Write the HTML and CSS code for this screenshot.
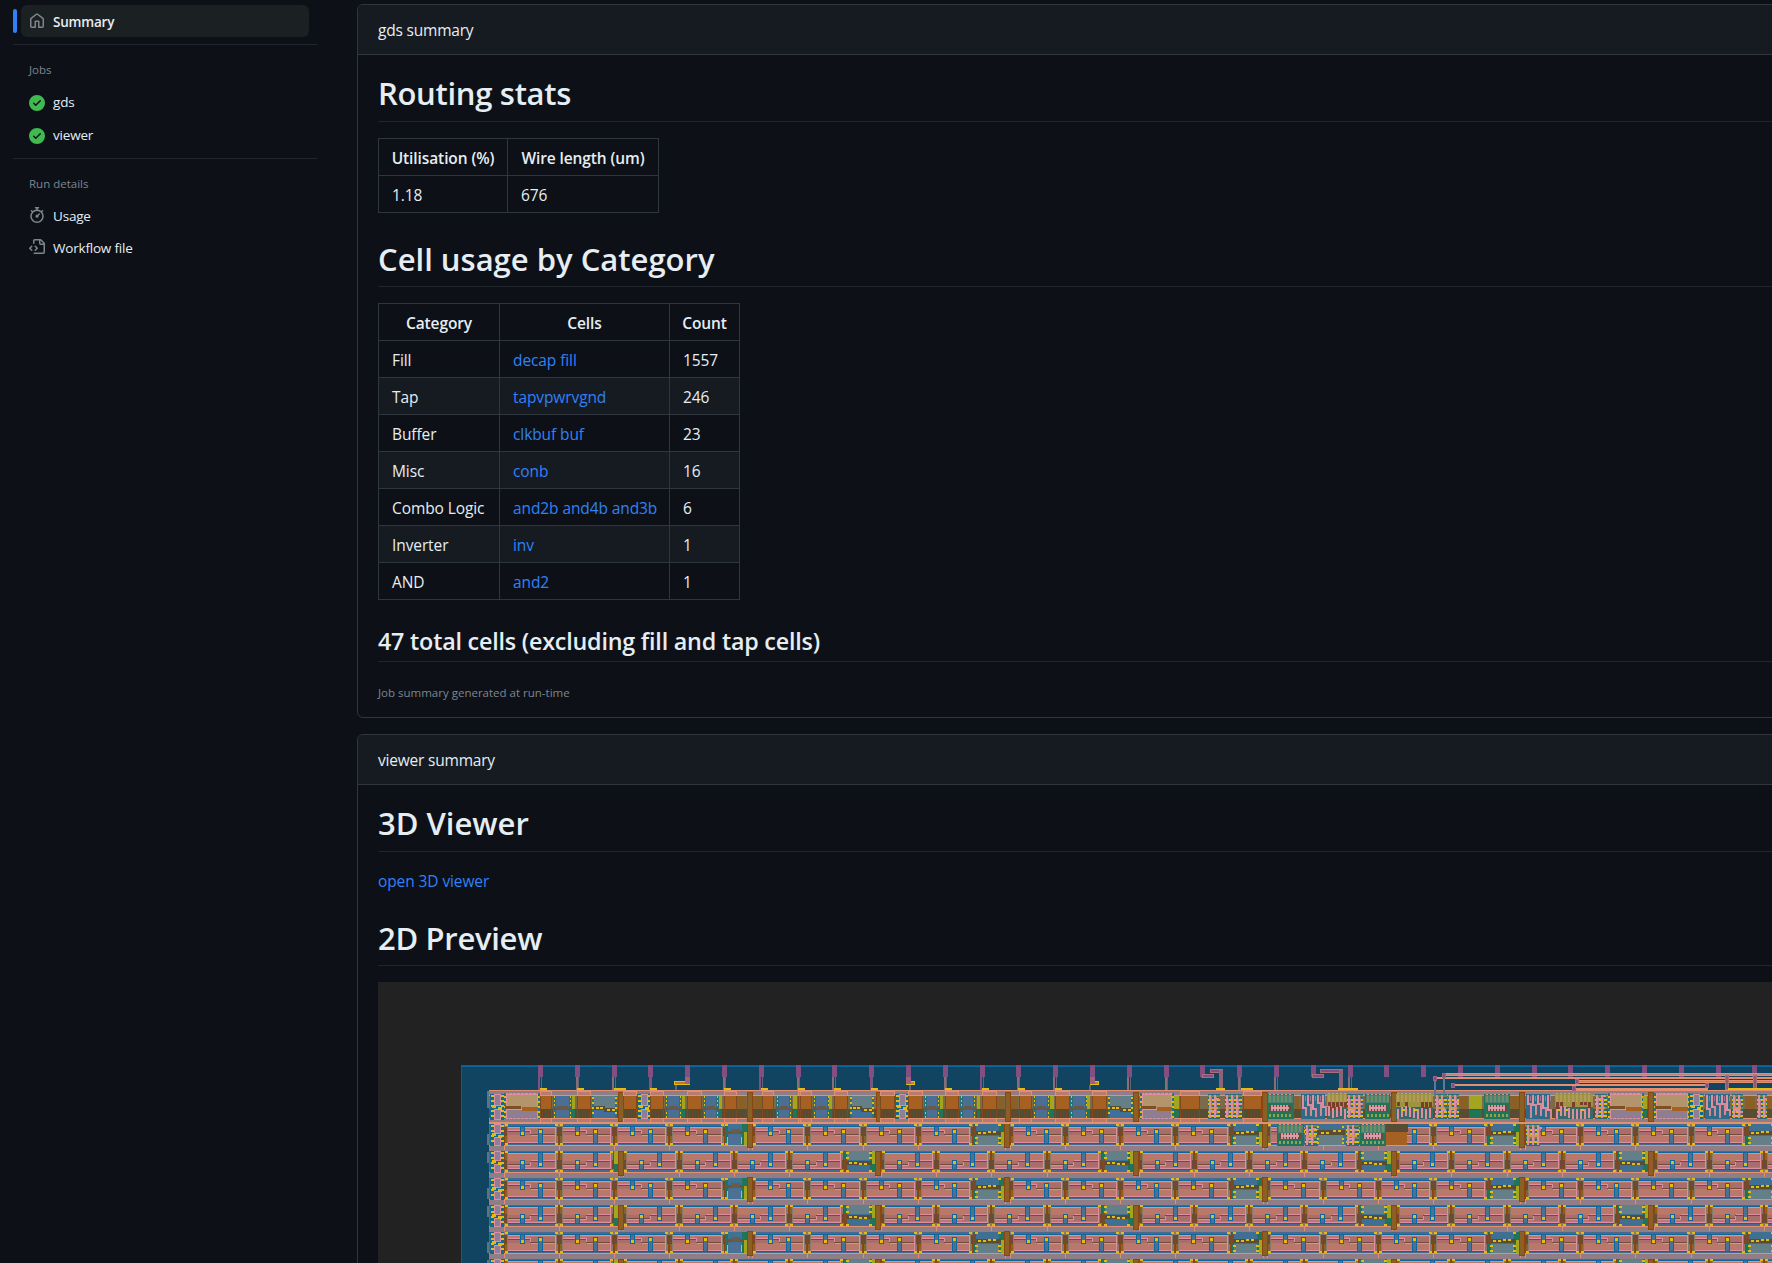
FILE: index.html
```html
<!DOCTYPE html>
<html lang="en">
<head>
<meta charset="utf-8">
<title>Workflow run summary</title>
<link rel="stylesheet" href="styles.css">
</head>
<body>
<div class="layout">
  <nav class="sidebar">
    <a class="item active"><svg class="icon" viewBox="0 0 16 16"><path d="M6.906.664a1.749 1.749 0 0 1 2.187 0l5.25 4.2c.415.332.657.835.657 1.367v7.019A1.75 1.75 0 0 1 13.25 15h-3.5a.75.75 0 0 1-.75-.75V9H7v5.25a.75.75 0 0 1-.75.75h-3.5A1.75 1.75 0 0 1 1 13.25V6.23c0-.531.242-1.034.657-1.366l5.25-4.2Zm1.25 1.171a.25.25 0 0 0-.312 0l-5.25 4.2a.25.25 0 0 0-.094.196v7.019c0 .138.112.25.25.25H5.5V8.25a.75.75 0 0 1 .75-.75h3.5a.75.75 0 0 1 .75.75v5.25h2.75a.25.25 0 0 0 .25-.25V6.23a.25.25 0 0 0-.094-.195Z"/></svg><span>Summary</span></a>
    <hr class="divider">
    <h2 class="group">Jobs</h2>
    <a class="item job"><svg class="icon ok" viewBox="0 0 16 16"><path d="M8 16A8 8 0 1 1 8 0a8 8 0 0 1 0 16Zm3.78-9.72a.751.751 0 0 0-.018-1.042.751.751 0 0 0-1.042-.018L6.75 9.19 5.28 7.72a.751.751 0 0 0-1.042.018.751.751 0 0 0-.018 1.042l2 2a.75.75 0 0 0 1.06 0Z"/></svg><span>gds</span></a>
    <a class="item job"><svg class="icon ok" viewBox="0 0 16 16"><path d="M8 16A8 8 0 1 1 8 0a8 8 0 0 1 0 16Zm3.78-9.72a.751.751 0 0 0-.018-1.042.751.751 0 0 0-1.042-.018L6.75 9.19 5.28 7.72a.751.751 0 0 0-1.042.018.751.751 0 0 0-.018 1.042l2 2a.75.75 0 0 0 1.06 0Z"/></svg><span>viewer</span></a>
    <hr class="divider second">
    <h2 class="group details">Run details</h2>
    <a class="item"><svg class="icon" viewBox="0 0 16 16"><path d="M5.75.75A.75.75 0 0 1 6.5 0h3a.75.75 0 0 1 0 1.5h-.75v1l-.001.041a6.724 6.724 0 0 1 3.464 1.435l.007-.006.75-.75a.749.749 0 0 1 1.275.326.749.749 0 0 1-.215.734l-.75.75-.006.007a6.75 6.75 0 1 1-10.548 0L2.72 5.03l-.75-.75a.751.751 0 0 1 .018-1.042.751.751 0 0 1 1.042-.018l.75.75.007.006A6.72 6.72 0 0 1 7.25 2.541V1.5H6.5a.75.75 0 0 1-.75-.75ZM8 14.5a5.25 5.25 0 1 0-.001-10.501A5.25 5.25 0 0 0 8 14.5Zm.389-6.7 1.33-1.33a.75.75 0 1 1 1.061 1.06L9.45 8.861A1.503 1.503 0 0 1 8 10.75a1.499 1.499 0 1 1 .389-2.95Z"/></svg><span>Usage</span></a>
    <a class="item"><svg class="icon" viewBox="0 0 16 16"><path d="M4 1.75C4 .784 4.784 0 5.75 0h5.586c.464 0 .909.184 1.237.513l2.914 2.914c.329.328.513.773.513 1.237v8.586A1.75 1.75 0 0 1 14.25 15h-9a.75.75 0 0 1 0-1.5h9a.25.25 0 0 0 .25-.25V6h-2.75A1.75 1.75 0 0 1 10 4.25V1.5H5.75a.25.25 0 0 0-.25.25v2.5a.75.75 0 0 1-1.5 0Zm1.72 4.97a.75.75 0 0 1 1.06 0l2 2a.75.75 0 0 1 0 1.06l-2 2a.749.749 0 0 1-1.275-.326.749.749 0 0 1 .215-.734l1.47-1.47-1.47-1.47a.75.75 0 0 1 0-1.06ZM3.28 7.78 1.81 9.25l1.47 1.47a.751.751 0 0 1-.018 1.042.751.751 0 0 1-1.042.018l-2-2a.75.75 0 0 1 0-1.06l2-2a.751.751 0 0 1 1.042.018.751.751 0 0 1 .018 1.042Zm8.22-6.218V4.25c0 .138.112.25.25.25h2.688l-.011-.013-2.914-2.914-.013-.011Z"/></svg><span>Workflow file</span></a>
  </nav>
  <main class="main">
    <section class="panel">
      <header class="panel-head">gds summary</header>
      <div class="panel-body">
        <h1 class="tight">Routing stats</h1>
        <table class="routing">
          <tr><th>Utilisation (%)</th><th>Wire length (um)</th></tr>
          <tr><td>1.18</td><td>676</td></tr>
        </table>
        <h1>Cell usage by Category</h1>
        <table class="cells">
          <tr><th>Category</th><th>Cells</th><th>Count</th></tr>
          <tr><td>Fill</td><td><a>decap</a> <a>fill</a></td><td>1557</td></tr>
          <tr><td>Tap</td><td><a>tapvpwrvgnd</a></td><td>246</td></tr>
          <tr><td>Buffer</td><td><a>clkbuf</a> <a>buf</a></td><td>23</td></tr>
          <tr><td>Misc</td><td><a>conb</a></td><td>16</td></tr>
          <tr><td>Combo Logic</td><td><a>and2b</a> <a>and4b</a> <a>and3b</a></td><td>6</td></tr>
          <tr><td>Inverter</td><td><a>inv</a></td><td>1</td></tr>
          <tr><td>AND</td><td><a>and2</a></td><td>1</td></tr>
        </table>
        <h2>47 total cells (excluding fill and tap cells)</h2>
        <p class="note">Job summary generated at run-time</p>
      </div>
    </section>
    <section class="panel viewer">
      <header class="panel-head">viewer summary</header>
      <div class="panel-body">
        <h1>3D Viewer</h1>
        <p class="link"><a>open 3D viewer</a></p>
        <h1 class="tight">2D Preview</h1>
        <canvas class="preview" id="chip" width="1394" height="281"></canvas>
      </div>
    </section>
  </main>
</div>
<script src="chip.js"></script>
</body>
</html>
```
FILE: styles.css
```css
* { box-sizing: border-box; }
html, body { height: 100%; }
body {
  margin: 0;
  overflow: hidden;
  background: #0d1117;
  color: #e6edf3;
  font: 13.5px/20px "Open Sans", "Noto Sans", sans-serif;
  letter-spacing: -.2px;
}
.layout { display: flex; height: 100%; overflow: hidden; }
.sidebar { flex: none; width: 357px; padding: 5px 40px 0 13px; }
.item {
  position: relative;
  display: flex;
  align-items: center;
  gap: 8px;
  width: 288px;
  height: 32px;
  margin-left: 8px;
  padding: 0 8px;
  border-radius: 6px;
}
.item span { padding-top: 2px; }
.item.job { height: 33px; padding-bottom: 1px; }
.item.job span { padding: 0 0 2px; }
.item.active { background: #1b2023; font-weight: 600; }
.item.active::before {
  content: "";
  position: absolute;
  left: -8px;
  top: 4px;
  width: 4px;
  height: 24px;
  border-radius: 6px;
  background: #2f81f7;
}
.icon { width: 16px; height: 16px; fill: #7d8590; }
.icon.ok { fill: #3fb950; }
.divider { height: 1px; margin: 7px 0 16px; border: 0; background: #21262d; }
.divider.second { margin: 5px 0 16px; }
.group {
  margin: 0 0 8px 16px;
  color: #7d8590;
  font-size: 11.5px;
  font-weight: 400;
  letter-spacing: 0;
  line-height: 18px;
}
.group.details { margin-bottom: 6px; }
.main { flex: none; width: 1440px; padding-top: 4px; }
.panel { border: 1px solid #30363d; border-radius: 6px; height: 714px; margin-bottom: 16px; }
.panel-head {
  height: 50px;
  padding: 13px 20px;
  border-bottom: 1px solid #30363d;
  border-radius: 6px 6px 0 0;
  background: #161b22;
  font-size: 15.5px;
  line-height: 24px;
}
.panel-body { padding: 16px 20px; font-size: 15.5px; line-height: 24px; letter-spacing: -.1px; }
.panel-body h1, .panel-body h2 {
  margin: 24px 0 16px;
  border-bottom: 1px solid #21262d;
  font-weight: 600;
}
.panel-body h1 { padding: 2px 0 7.6px; font-size: 31px; line-height: 40px; letter-spacing: 0; }
.panel-body h1.tight { letter-spacing: -.3px; }
.panel-body h2 { padding: 1.5px 0 5.7px; font-size: 23.3px; line-height: 30px; letter-spacing: -.2px; }
.panel-body h1:first-child { margin-top: 0; }
table { border-collapse: collapse; table-layout: fixed; }
.routing { width: 281px; }
.cells { width: 362px; }
.routing th:first-child { width: 129px; }
.cells th:first-child { width: 121px; }
.cells th:nth-child(2) { width: 170px; }
th, td { height: 37px; padding: 7px 13px 5px; border: 1px solid #30363d; text-align: left; white-space: nowrap; }
th { font-weight: 600; text-align: center; padding: 7px 0 5px; }
.cells tr:nth-child(odd):not(:first-child) td { background: #161b22; }
a { color: inherit; }
td a, .link a { color: #2f81f7; }
.note { margin: 21px 0 0; color: #7d8590; font-size: 11.5px; line-height: 20px; letter-spacing: 0; }
.link { margin: 0; padding-top: 1px; height: 24px; }
.preview { display: block; width: 1394px; height: 281px; background: #222; }
```
FILE: chip.js
```js
const canvas = document.getElementById('chip');
const g = canvas.getContext('2d');
g.translate(-378, -982);

const SALMON = '#e2906f', RAIL = '#917d86', BODY = '#b97869', ROSE = '#a96d6c', PINK = '#dd8fa0';
const BLUE = '#0d66a0', SLATE = '#476b8c', TEAL = '#647f88', YEL = '#e4bc10', BROWN = '#7a4a28';
const DARK = '#574d35', ORANGE = '#a56022', RUST = '#8b4513', OLIVE = '#a3a51e', GREEN = '#20745a';
const PURPLE = '#834e81', TAN = '#b3946b', DIE = '#114461', GREY = '#857a6c';

function r(x, y, w, h, c) {
  g.fillStyle = c;
  const a = Math.round(x), b = Math.round(y);
  g.fillRect(a, b, Math.max(1, Math.round(x + w) - a), Math.max(1, Math.round(y + h) - b));
}
function box(x, y, w, h, edge, fill) {
  r(x, y, w, h, edge);
  r(x + 1, y + 1, w - 2, h - 2, fill);
}

/* die area, pins and background */
r(378, 982, 1394, 281, '#222222');
r(461, 1065, 1311, 198, DIE);
r(461, 1065, 1311, 1, '#0e5c93');
r(462, 1066, 1310, 1, '#0d66a0');
r(461, 1065, 1, 198, '#0d5c93');

/* vertical mirroring inside one row */
let top0 = 0, flip = false;
function m(x, y, w, h, c) { r(x, flip ? top0 + 21 - y - h : top0 + y, w, h, c); }
function dots(x, yy) { yy.forEach(y => m(x, y, 3, 2, YEL)); }

function joint(x) {
  m(x - 3, 0, 7, 21, GREY);
  m(x - 2, 3, 5, 9, '#704a2c');
  m(x - 1, 12, 2, 9, RUST);
  m(x + 1, 12, 2, 9, '#8a6224');
  dots(x - 4, [0, 19]);
  dots(x + 1, [0, 19]);
}
function decap(x, w) {
  m(x, 0, w, 21, SLATE);
  m(x + 3, 2, w - 6, 1, BLUE);
  m(x + 3, 3, w - 6, 16, PINK);
  m(x + 4, 4, w - 8, 14, BODY);
  m(x + 4, 5, w - 8, 6, ROSE);
  m(x + 4, 5, 22, 1, '#c0767f');
  m(x + 3, 6, w / 2 - 4, 1, PINK);
  m(x + 3, 7, w / 2 - 4, 1, '#744a38');
  m(x + w / 2 - 1, 6, 1, 5, PINK);
  m(x + w / 2 - 1, 10, w / 2 - 3, 1, '#744a38');
  m(x + w / 2, 11, w / 2 - 3, 1, PINK);
  m(x + 3, 19, w - 6, 1, BLUE);
  m(x + 16, 2, 5, 10, BLUE);
  m(x + 17, 3, 3, 8, '#4a7393');
  m(x + 17, 8, 3, 3, YEL);
  m(x + 34, 5, 5, 14, BLUE);
  m(x + 35, 6, 3, 13, '#4a7393');
  m(x + 35, 6, 3, 3, YEL);
}
function wide(x) {
  m(x, 0, 28, 21, GREEN);
  m(x + 3, 0, 23, 21, '#3f6f92');
  m(x + 3, 12, 23, 9, TEAL);
  m(x, 7, 28, 4, DARK);
  m(x, 1, 3, 11, BROWN);
  [5, 10].forEach(d => m(x + d, 8, 3, 2, YEL));
  [15, 20].forEach(d => m(x + d, 7, 3, 2, YEL));
  dots(x + 2, [0, 13, 18]);
  dots(x + 25, [0, 13, 18]);
  m(x + 28, 0, 4, 8, GREEN);
  m(x + 28, 8, 4, 13, OLIVE);
}
function small(x) {
  m(x, 0, 19, 21, GREEN);
  m(x + 3, 0, 14, 21, '#3e7393');
  m(x + 4, 11, 11, 9, '#4f6f96');
  m(x + 1, 7, 18, 3, '#68543f');
  m(x + 6, 5, 9, 5, '#6c5a4c');
  dots(x, [0, 19]);
  m(x + 2, 13, 1, 7, YEL);
  m(x + 16, 13, 1, 7, YEL);
  m(x + 19, 0, 4, 8, GREEN);
  m(x + 19, 8, 4, 13, OLIVE);
}
function tap(x, y, h) {
  box(x - 2, y, 6, h, RUST, '#8a6026');
}
function conb(x, y, h) {
  r(x, y, 14, h, '#156a8c');
  for (let k = 1; k < h - 1; k += 5) {
    r(x + 1, y + k, 3, 2, YEL);
    r(x + 11, y + k, 3, 2, YEL);
  }
  box(x + 4, y, 7, h / 2 - 1, PINK, '#8f7e98');
  box(x + 4, y + h / 2 + 2, 7, h / 2 - 2, PINK, '#8f7e98');
  r(x + 2, y + h / 2 - 2, 4, 3, YEL);
  r(x + 8, y + h / 2, 4, 3, YEL);
}

/* lower rows: taps and filler cells alternate by half a period */
const SITE = 4.6, DEC = 55.2, PERIOD = 257.6;
for (let k = 0; k < 6; k++) {
  top0 = 1124 + 27 * k;
  flip = k % 2 === 1;
  r(489, top0 - 1, 1283, 28, RAIL);
  r(489, top0, 1283, 21, SLATE);
  const firstTap = flip ? 618.7 : 747.5;
  const taps = [];
  for (let t = firstTap; t < 1780; t += PERIOD) taps.push(t);
  const cells = [];
  if (flip) { cells.push(503.7, 558.9); }
  else { cells.push(503.7, 558.9, 614.1, 669.3); }
  taps.forEach(t => { for (let j = 0; j < 4; j++) cells.push(t + SITE + j * DEC); });
  cells.forEach(x => decap(x, DEC));
  r(487, top0 + (flip ? 1 : 10), 2, 11, '#5d7383');
  cells.forEach(x => { joint(x); joint(x + DEC); });
  taps.forEach((t, i) => {
    if (i === 0 && flip) { m(t - 5, 0, 5, 8, GREEN); m(t - 5, 8, 4, 13, OLIVE); }
    else if (i === 0) small(t - 23);
    else wide(t - 32.2);
  });
  r(489, top0 + 21, 1283, 6, SALMON);
  r(489, top0 + 22, 1283, 4, RAIL);
  cells.forEach(x => r(x, top0 + 21, 1, 6, SALMON));
  taps.forEach(t => {
    r(t, top0 + 21, 1, 6, SALMON);
    tap(t + 1, flip ? top0 : top0 - 1, 25);
  });
  conb(490, top0, 22);
}

/* logic blocks with dense local wiring */
let seed = 7;
function rnd() { seed = (seed * 16807) % 2147483647; return seed / 2147483647; }
function comb(x, y, w, h) {
  r(x, y, w, h, '#2c6a80');
  for (let j = y + 1; j < y + h - 2; j += 4) { r(x, j, w, 2, j % 3 ? YEL : '#6f8a40'); }
  for (let i = x + 1; i < x + w - 2; i += 5) {
    r(i, y + 1, 2, h - 2, PINK);
    r(i + 2, y + 2 + 4 * rnd(), 1, h - 8, '#a9788c');
    r(i + 1, y + h * rnd() * .7, 4, 2, PINK);
  }
  r(x + 1, y + h / 2, w - 3, 2, '#d89458');
}
function greenBlock(x, y, w, h) {
  r(x, y, w, h, GREEN);
  r(x + 1, y + 1, w - 2, 8, '#4f8074');
  for (let i = x + 2; i < x + w - 2; i += 4) {
    r(i, y + 2, 2, 6, '#6d9064');
    r(i, y, 2, 1, PINK);
    r(i, y + h - 5, 2, 3, '#8fa24e');
  }
  r(x + 3, y + h / 2 - 2, w - 6, 6, '#6b4a3c');
  for (let i = x + 4; i < x + w - 5; i += 3) r(i, y + h / 2 - 2, 2, 6, PINK);
  r(x + 4, y + h / 2, w - 9, 2, '#d5a0a8');
}
function maze(x, y, w, h) {
  r(x, y, w, h, '#2f6a86');
  for (let i = x + 1; i < x + w - 1; i += 5) {
    const a = 2 + 6 * rnd(), b = 8 + 8 * rnd();
    r(i, y + 1, 2, b, PINK);
    r(i, y + b, 5, 2, PINK);
    r(i + 3, y + b, 2, h - b - a / 2, '#cf8a98');
    r(i + 3, y + 2, 1, 5, '#8f7e98');
  }
}
function mixed(x, y, w, h) {
  r(x, y, w, 13, '#9c9440');
  r(x, y + 13, w, h - 13, '#3a6a68');
  for (let i = x + 1; i < x + w - 2; i += 4) {
    r(i, y + 1, 2, 7, '#b59a5c');
    r(i, y - 1, 2, 1, PINK);
    if (rnd() > .4) r(i, y + 8, 3, 3 + 7 * rnd(), '#7a3f26');
    r(i, y + 12 + 3 * rnd(), 2, 10, PINK);
    if (rnd() > .6) r(i + 1, y + 15, 3, 2, YEL);
  }
}

/* first placement row */
const T = 1090;
r(489, T, 1283, 33, RAIL);
r(489, T + 5, 1283, 24, '#6c6a50');
r(489, T + 5, 1283, 14, '#7c6a4a');
r(489, T + 19, 1283, 9, DARK);
r(487, T + 1, 2, 17, '#5d7383');
r(489, T, 1283, 1, SALMON);
r(489, T + 5, 1283, 1, SALMON);
r(489, T + 28, 1283, 1, SALMON);
r(489, T + 32, 1283, 2, SALMON);

const draw = {
  O(x, w) {
    box(x, T + 1, w, 5, SALMON, '#b97b70');
    box(x, T + 28, w, 5, SALMON, '#b97b70');
    r(x, T + 6, w, 22, '#7c4a22');
    r(x + 1, T + 6, w - 2, 13, ORANGE);
    r(x + 1, T + 19, w - 2, 9, '#4f4d33');
    for (let i = x + 2; i < x + w - 1; i += 3) r(i, T + 20, 1, 7, '#74461f');
  },
  B(x, w) {
    r(x - 2, T + 6, w + 4, 22, '#2b7078');
    r(x + 1, T + 6, w - 2, 22, '#4a6f92');
    for (let j = 6; j < 27; j += 4) { r(x - 1, T + j, 1, 2, YEL); r(x + w, T + j, 1, 2, YEL); }
    r(x - 3, T + 18, w + 6, 2, '#6a5540');
    r(x + 2, T + 16, w - 4, 4, '#68594c');
  },
  Y(x, w) { r(x, T + 6, w, 13, OLIVE); r(x, T + 20, w, 8, GREEN); },
  D(x, w) {
    r(x - 1, T + 6, w + 2, 22, '#2a7278');
    r(x + 1, T + 6, w - 2, 12, TEAL);
    r(x + 1, T + 20, w - 2, 8, '#3f6f9a');
    r(x, T + 16, w / 2, 4, DARK);
    r(x + w / 2 - 1, T + 18, w / 2 + 1, 4, DARK);
    [.1, .3].forEach(f => r(x + w * f, T + 17, 3, 2, YEL));
    [.6, .82].forEach(f => r(x + w * f, T + 19, 3, 2, YEL));
    for (let j = 7; j < 27; j += 5) { r(x - 1, T + j, 2, 2, YEL); r(x + w - 1, T + j, 2, 2, YEL); }
  },
  K(x, w) { r(x - 2, T + 3, w + 4, 26, '#80745a'); conb(x - 3, T + 4, 25); },
  P(x, w) {
    r(x - 2, T + 3, w + 4, 26, '#2c7078');
    for (let j = 6; j < 27; j += 5) { r(x - 2, T + j, 2, 2, YEL); r(x + w, T + j, 2, 2, YEL); }
    r(x, T + 3, w, 26, PINK);
    r(x + 1, T + 5, w - 2, 13, TAN);
    r(x + 1, T + 20, w - 2, 8, '#8f7e8f');
    r(x - 1, T + 16, w / 2, 3, '#7e4f22');
    r(x + w / 2, T + 17, w / 2, 4, ORANGE);
    for (let i = x + 2; i < x + w; i += 4) { r(i, T + 3, 1, 1, '#8f7e8f'); r(i, T + 28, 1, 1, '#8f7e8f'); }
  },
  N(x, w) { r(x, T + 6, w, 13, '#8a6026'); r(x, T + 19, w, 9, DARK); },
  L(x, w) { comb(x, T + 4, w, 25); },
  G(x, w) { greenBlock(x, T + 4, w, 25); },
  M(x, w) { maze(x, T + 4, w, 25); },
  X(x, w) { mixed(x, T + 4, w, 25); },
  T(x) { tap(x + 2, T + 2, 30); }
};
const placed = [
  [480, 'P78-175 O180-216 B224-270 Y276-286 O290-333 D340-408 T413-426 O430-470 K481-505 O510-553 B562-600 Y605-616 O620-665 B674-710 Y716-727 O731-770 N772-798 T802-816 N820-845 O845-883 B894-931 Y938-950 O953-990'],
  [800, 'O0-36 B44-83 Y86-97 O103-145 D152-220 T227-239 O241-285 K294-316 O324-370 B378-413 Y419-430 O435-478 B486-523 Y530-541 O546-590 N592-612 T615-630 N634-655 O656-697 B705-743 Y750-761 O766-809 B817-858 Y860-871 O876-921 D928-995 T1000-1016 P1025-1117 Y1122-1137'],
  [1180, 'O0-60 L83-120 L135-185 O190-245 T246-260 G262-342 N345-358 M362-435 X440-500 L500-548 G555-630 T634-648 X648-760 L765-800 L805-838 N840-865 Y867-905 G912-990'],
  [1450, 'G103-180 N180-207 T208-222 M228-300 X315-430 L435-470 P480-575 Y578-590 T595-612 P618-713 K725-755 M765-840 L845-880 N885-915 L920-950 N952-966']
];
placed.forEach(([ox, list]) => list.split(' ').forEach(s => {
  const [a, b] = s.slice(1).split('-').map(Number);
  draw[s[0]](ox + a / 3, (b - a) / 3);
}));
conb(490, T + 4, 26);

/* logic cells in the second row */
greenBlock(1277, 1124, 27, 22);
comb(1305, 1124, 13, 22);
r(1318, 1124, 28, 21, '#3f6f92');
r(1319, 1135, 24, 10, TEAL);
r(1317, 1130, 28, 5, DARK);
[1321, 1326, 1333, 1338].forEach((x, i) => r(x, i < 2 ? 1132 : 1130, 3, 2, YEL));
[1126, 1138, 1142].forEach(y => { r(1317, y, 2, 2, YEL); r(1342, y, 2, 2, YEL); });
comb(1346, 1124, 13, 22);
greenBlock(1360, 1124, 26, 22);
r(1386, 1124, 22, 8, DARK);
r(1386, 1132, 21, 13, ORANGE);
comb(1526, 1124, 14, 22);

/* pins; the routed ones get their own wires further down */
const routed = [4, 10, 15, 18, 21];
for (let k = 0; k < 34; k++) {
  const x = 538 + 36.8 * k;
  r(x, 1065, 5, 12, PURPLE);
  if (k < 23 && !routed.includes(k)) {
    r(x + (k % 2), 1077, 2, 13, k % 3 ? '#8c6d72' : '#834e81');
    r(x + 3, 1077, 1, 13, '#5b6678');
    if (k < 16) box(x + 2, 1088, k === 2 ? 12 : 7, 2, YEL, YEL);
  }
}
box(674, 1081, 16, 4, YEL, '#c07a2c');
box(906, 1081, 9, 4, YEL, '#c8795a');
box(1090, 1081, 9, 4, YEL, '#c8795a');
[685, 906, 1090].forEach(x => { r(x, 1077, 5, 7, '#a0617c'); });
[675, 909, 1089].forEach(x => r(x, 1085, 2, 5, '#5b6678'));
/* routed pin wires */
r(1201, 1065, 4, 13, PURPLE);
box(1202, 1074, 12, 4, '#a56f7c', PURPLE);
box(1210, 1069, 13, 4, '#a56f7c', PURPLE);
r(1219, 1070, 4, 20, '#8c6477');
box(1312, 1074, 12, 4, '#a56f7c', PURPLE);
box(1320, 1069, 23, 4, '#a56f7c', PURPLE);
r(1339, 1070, 4, 20, '#8c6477');
r(1216, 1088, 9, 2, YEL);
r(1241, 1088, 12, 2, YEL);
r(1338, 1088, 20, 2, YEL);

/* long horizontal routes */
function route(x0, x1, y, h) { r(x0, y, x1 - x0, h, SALMON); if (h > 2) r(x0, y + 1, x1 - x0, h - 2, '#bf7f75'); }
route(1443, 1725, 1073, 3);
route(1434, 1772, 1077, 2);
route(1576, 1772, 1080, 3);
route(1452, 1708, 1084, 2);
route(1578, 1708, 1084, 2);
route(1575, 1708, 1088, 2);
route(1725, 1772, 1073, 3);
r(1434, 1078, 2, 18, '#5d7893');
r(1443, 1076, 2, 20, '#5d7893');
[[1433, 1076], [1442, 1073], [1451, 1083], [1575, 1079], [1572, 1086], [1705, 1083]].forEach(p => box(p[0], p[1], 4, 5, '#a0608a', PURPLE));
[1725, 1753].forEach(x => box(x, 1075, 4, 15, '#a96f72', '#8c5f74'));
r(1728, 1088, 44, 2, YEL);
```
